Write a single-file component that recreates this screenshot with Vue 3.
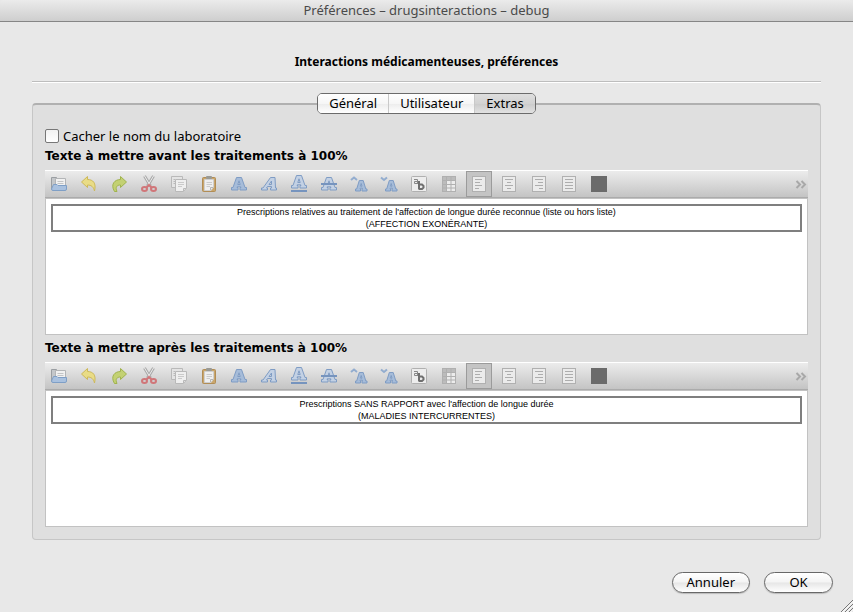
<script setup>
import { ref } from 'vue'

const tabs = ['Général', 'Utilisateur', 'Extras']
const activeTab = ref('Extras')
const hideLab = ref(false)

const letterA = 'M0.500 14V11.500H2L5.500 1.500H10.500L14 11.500H15.500V14H9V11.500H10L9.800 10.800H6.200L6 11.500H7V14ZM6.800 8.500H9.200L8 4.800Z'
const smallA = 'M4.500 15V13H5.700L8.300 4.500H12.200L14.800 13H16V15H11V13H11.500L11.300 12.200H9.200L9 13H9.500V15ZM9.500 10.200H11L10.200 7.500Z'

const tools = [
  { id: 'open', label: 'Ouvrir' },
  { id: 'undo', label: 'Annuler la saisie' },
  { id: 'redo', label: 'Rétablir' },
  { id: 'cut', label: 'Couper' },
  { id: 'copy', label: 'Copier' },
  { id: 'paste', label: 'Coller' },
  { id: 'bold', label: 'Gras' },
  { id: 'italic', label: 'Italique' },
  { id: 'underline', label: 'Souligné' },
  { id: 'strike', label: 'Barré' },
  { id: 'bigger', label: 'Agrandir' },
  { id: 'smaller', label: 'Réduire' },
  { id: 'font', label: 'Police' },
  { id: 'table', label: 'Tableau' },
  { id: 'left', label: 'Aligner à gauche', lines: 'M4 4.500H11M4 7.500H9M4 10.500H11M4 13.500H8' },
  { id: 'center', label: 'Centrer', lines: 'M4 4.500H12M6 7.500H10M4 10.500H12M6 13.500H10' },
  { id: 'right', label: 'Aligner à droite', lines: 'M4 4.500H12M7 7.500H12M4 10.500H12M8 13.500H12' },
  { id: 'justify', label: 'Justifier', lines: 'M4 4.500H12M4 7.500H12M4 10.500H12M4 13.500H12' },
  { id: 'color', label: 'Couleur' },
]

const editors = ref([
  {
    id: 'before',
    title: 'Texte à mettre avant les traitements à 100%',
    align: 'left',
    lines: [
      "Prescriptions relatives au traitement de l'affection de longue durée reconnue (liste ou hors liste)",
      '(AFFECTION EXONÉRANTE)',
    ],
  },
  {
    id: 'after',
    title: 'Texte à mettre après les traitements à 100%',
    align: 'left',
    lines: [
      "Prescriptions SANS RAPPORT avec l'affection de longue durée",
      '(MALADIES INTERCURRENTES)',
    ],
  },
])
</script>

<template>
  <div class="window">
    <header class="titlebar">Préférences – drugsinteractions – debug</header>
    <main class="content">
      <h1 class="heading">Interactions médicamenteuses, préférences</h1>
      <div class="tabs" role="tablist">
        <button
          v-for="tab in tabs"
          :key="tab"
          type="button"
          role="tab"
          class="tab"
          :class="{ active: tab === activeTab }"
          :aria-selected="tab === activeTab"
          @click="activeTab = tab"
        >{{ tab }}</button>
      </div>
      <section class="panel">
        <label class="check" for="hide-lab">
          <input id="hide-lab" v-model="hideLab" type="checkbox" />
          Cacher le nom du laboratoire
        </label>
        <div class="groups">
          <div v-for="editor in editors" :key="editor.id">
            <h2 :id="editor.id" class="label">{{ editor.title }}</h2>
            <div class="toolbar" role="toolbar">
              <button
                v-for="tool in tools"
                :key="tool.id"
                type="button"
                class="tool"
                :class="{ pressed: tool.id === editor.align }"
                :aria-label="tool.label"
                @click="tool.lines && (editor.align = tool.id)"
              >
                <svg width="18" height="18" viewBox="0 0 18 18">
                  <g v-if="tool.id === 'open'">
                    <path d="M1.500 14V2.500H6.500L7.500 4H9V14Z" fill="#c4c7ca" stroke="#9a9ea2" />
                    <path d="M5.500 12V3.500H15.500V12Z" fill="#f1f1f1" stroke="#b3b5b7" />
                    <path d="M7.500 6.500H13.500M7.500 8.500H13.500" stroke="#c2c4c6" />
                    <path d="M3.500 9.500H7L8 10.500H16.500V14Q16.500 15.500 15 15.500H3Q1.500 15.500 1.500 14Z" fill="#a9c1df" stroke="#7f9fc6" />
                  </g>
                  <g v-else-if="tool.id === 'undo'">
                    <path d="M1.500 7L7.500 1.500V4.500C13 4.500 16.500 8 14.500 16C13.500 12 11.500 10 7.500 10V12.500Z" fill="#e9dc86" stroke="#cdb95a" stroke-linejoin="round" />
                  </g>
                  <g v-else-if="tool.id === 'redo'">
                    <path d="M16.500 7L10.500 1.500V4.500C5 4.500 0 9 4.500 16.500H7C5 12 7 10 10.500 10V12.500Z" fill="#c3d173" stroke="#a0b34e" stroke-linejoin="round" />
                  </g>
                  <g v-else-if="tool.id === 'cut'" fill="none">
                    <path d="M4.500 1L10.500 11M13.500 1L7.500 11" stroke="#a9a9a9" stroke-width="3" />
                    <path d="M4.500 1L10.500 11M13.500 1L7.500 11" stroke="#ededed" />
                    <ellipse cx="4.500" cy="14" rx="2.500" ry="2" stroke="#d07679" stroke-width="2" />
                    <ellipse cx="13.500" cy="14" rx="2.500" ry="2" stroke="#d07679" stroke-width="2" />
                    <path d="M6.500 12.500L9 10L11.500 12.500" stroke="#d07679" stroke-width="2" />
                  </g>
                  <g v-else-if="tool.id === 'copy'" stroke="#b9b9b9">
                    <path d="M1.500 1.500H12.500V12.500H1.500Z" fill="#e4e4e4" />
                    <path d="M3.500 4.500H5M3.500 6.500H5M3.500 8.500H5" />
                    <path d="M5.500 4.500H16.500V13L13.500 16.500H5.500Z" fill="#efefef" />
                    <path d="M8 7.500H14M8 9.500H14M8 11.500H12" stroke="#cacaca" />
                    <path d="M13.500 16V13.500H16" fill="none" />
                  </g>
                  <g v-else-if="tool.id === 'paste'">
                    <rect x="2.500" y="2.500" width="13" height="14" rx="1" fill="#c9a66c" stroke="#b18d56" />
                    <path d="M4.500 4.500H13.500V12L11 15.500H4.500Z" fill="#efefef" stroke="#cfcfcf" />
                    <rect x="6" y="1" width="6" height="3" rx="1" fill="#9a9a94" />
                    <path d="M6.500 7.500H12M6.500 9.500H12M6.500 11.500H10" stroke="#cacaca" />
                    <path d="M10.500 15V12.500H13" fill="none" stroke="#b5b5b5" />
                  </g>
                  <g v-else-if="tool.id === 'bold'" transform="translate(1 1)" class="letter">
                    <path :d="letterA" fill-rule="evenodd" />
                  </g>
                  <g v-else-if="tool.id === 'italic'" class="letter light">
                    <path d="M1.500 15V13H3L10.500 2.500H15L15.500 13H16.500V15H10.500V13H11.500V11.500H7.500L6.500 13H7.500V15ZM9 9.500H11.500V6Z" fill-rule="evenodd" />
                  </g>
                  <g v-else-if="tool.id === 'underline'" class="letter light">
                    <path :d="letterA" fill-rule="evenodd" transform="translate(1 -1)" />
                    <path d="M1 16H17" class="bar" />
                  </g>
                  <g v-else-if="tool.id === 'strike'" class="letter light">
                    <path :d="letterA" fill-rule="evenodd" transform="translate(1 1)" />
                    <path d="M1 9H17" class="bar" />
                  </g>
                  <g v-else-if="tool.id === 'bigger'" class="letter">
                    <path :d="smallA" fill-rule="evenodd" transform="translate(1 1)" />
                    <path d="M1 5L4 2.500L7 5" class="chevron" />
                  </g>
                  <g v-else-if="tool.id === 'smaller'" class="letter">
                    <path :d="smallA" fill-rule="evenodd" transform="translate(1 1)" />
                    <path d="M1 2.500L4 5L7 2.500" class="chevron" />
                  </g>
                  <g v-else-if="tool.id === 'font'" fill="none" stroke="#6f6f6f">
                    <rect x="1.500" y="1.500" width="15" height="15" rx="1" fill="#ededed" stroke="#b0b0b0" />
                    <path d="M4 4.500H7.500V8.500M7.500 6.500H4.500V8.500H8.500" stroke="#888" />
                    <path d="M9 6V14.500M9 9.500H12L13.500 11V12.500L12 14H9" stroke-width="2" />
                  </g>
                  <g v-else-if="tool.id === 'table'" stroke="#b0b0b0">
                    <rect x="2.500" y="1.500" width="13" height="15" fill="#ececec" />
                    <path d="M3 2H15V5H3ZM3 2H6V16H3Z" fill="#bcbcbc" stroke="none" />
                    <path d="M2.500 5.500H15.500M2.500 9.500H15.500M2.500 13H15.500M6.500 1.500V16.500M11 1.500V16.500" />
                  </g>
                  <g v-else-if="tool.id === 'color'">
                    <rect x="1" y="1" width="16" height="16" fill="#6b6b6b" />
                  </g>
                  <g v-else fill="none" stroke="#b0b0b0">
                    <rect x="2.500" y="1.500" width="13" height="15" fill="#ebebeb" />
                    <path :d="tool.lines" transform="translate(1 0)" stroke="#adadad" />
                  </g>
                </svg>
              </button>
              <button type="button" class="more" aria-label="Plus d'outils">
                <svg width="12" height="9" viewBox="0 0 12 9">
                  <path d="M1.500 1L5 4.500L1.500 8M6.500 1L10 4.500L6.500 8" fill="none" stroke="#a8a8a8" stroke-width="2" />
                </svg>
              </button>
            </div>
            <div class="editor" role="textbox" contenteditable="true" aria-multiline="true" :aria-labelledby="editor.id">
              <div class="frame">
                <p v-for="line in editor.lines" :key="line">{{ line }}</p>
              </div>
            </div>
          </div>
        </div>
      </section>
      <footer class="actions">
        <button type="button" class="push">Annuler</button>
        <button type="button" class="push">OK</button>
      </footer>
    </main>
    <svg class="grip" width="12" height="12" viewBox="0 0 12 12">
      <path d="M0 12L12 0M4 12L12 4M8 12L12 8" stroke="#777" fill="none" />
      <path d="M1.500 12L12 1.500M5.500 12L12 5.500M9.500 12L12 9.500" stroke="#fff" fill="none" />
    </svg>
  </div>
</template>

<style>
body {
  margin: 0;
  background: #e8e8e8;
}
</style>

<style scoped>
.window {
  position: relative;
  box-sizing: border-box;
  min-height: 100vh;
  display: flex;
  flex-direction: column;
  background: #e8e8e8;
  color: #000;
  font-family: "Noto Sans", "Open Sans", sans-serif;
  font-size: 13px;
}
.titlebar {
  height: 21px;
  line-height: 21px;
  border-bottom: 1px solid #868686;
  border-radius: 4px 4px 0 0;
  background: linear-gradient(#ebebeb, #cecece);
  color: #4a4a4a;
  text-align: center;
}
.content {
  flex: 1;
  display: flex;
  flex-direction: column;
  padding: 30px 32px 0;
}
.heading {
  margin: 0;
  padding-bottom: 9px;
  border-bottom: 1px solid #bdbdbd;
  box-shadow: 0 1px #fff;
  font-size: 12px;
  line-height: 20px;
  text-align: center;
}
.tabs {
  position: relative;
  display: flex;
  align-self: center;
  margin: 11px 0 -11px;
  border: 1px solid #6b6b6b;
  border-radius: 5px;
  overflow: hidden;
}
.tab {
  height: 19px;
  padding: 0 11px;
  border: 0;
  border-right: 1px solid #c9c9c9;
  background: linear-gradient(#fff, #f6f6f6 50%, #ececec 51%, #fff);
  font: inherit;
  line-height: 19px;
}
.tab:last-child {
  border-right: 0;
}
.tab.active {
  background: linear-gradient(#dedede, #d2d2d2 50%, #cacaca 51%, #e2e2e2);
}
.panel {
  padding: 22px 12px 12px;
  border: 1px solid #c6c6c6;
  border-top: 2px solid #b0b0b0;
  border-radius: 4px;
  background: #dfdfdf;
}
.check {
  display: flex;
  align-items: center;
  gap: 4px;
  height: 18px;
}
.check input {
  appearance: none;
  box-sizing: border-box;
  width: 14px;
  height: 14px;
  margin: 0;
  border: 1px solid #777;
  border-radius: 2px;
  background: linear-gradient(#f2f2f2, #fff);
}
.check input:checked {
  background: #6b8fc0;
}
.groups {
  display: grid;
  gap: 2px;
}
.label {
  margin: 0 0 3px;
  font-family: "DejaVu Sans", sans-serif;
  font-size: 12px;
  line-height: 22px;
}
.toolbar {
  display: flex;
  align-items: center;
  gap: 4px;
  height: 26px;
  padding: 0 1px;
  border-top: 1px solid #fff;
  border-bottom: 1px solid #ababab;
  background: linear-gradient(#ececec, #c4c4c4);
}
.tool {
  box-sizing: border-box;
  display: grid;
  place-items: center;
  flex: none;
  width: 26px;
  height: 26px;
  padding: 0;
  border: 1px solid transparent;
  background: none;
}
.tool.pressed {
  border-color: #9b9b9b;
  background: #c4c4c4;
}
.letter {
  fill: #a6bcd9;
  stroke: #7f9cc4;
}
.letter.light {
  fill: #c3d1e4;
}
.letter .bar {
  stroke: #7694be;
  stroke-width: 2;
}
.letter .chevron {
  fill: none;
  stroke: #93adcf;
  stroke-width: 2;
}
.more {
  display: flex;
  margin-left: auto;
  padding: 0;
  border: 0;
  background: none;
}
.editor {
  min-height: 125px;
  padding: 5px;
  border: 1px solid #c2c2c2;
  background: #fff;
  outline: none;
}
.frame {
  border: 2px solid #7f7f7f;
  font-family: "Liberation Sans", Arial, sans-serif;
  font-size: 9px;
  line-height: 12px;
  text-align: center;
}
.frame p {
  margin: 0;
}
.actions {
  display: flex;
  justify-content: flex-end;
  gap: 14px;
  margin: 32px -12px 0 0;
}
.push {
  box-sizing: border-box;
  min-width: 69px;
  height: 21px;
  padding: 0 14px;
  border: 1px solid #686868;
  border-radius: 11px;
  background: linear-gradient(#fff, #f4f4f4 48%, #e6e6e6 52%, #fff);
  box-shadow: 0 1px 1px #bbb;
  font: inherit;
  line-height: 19px;
}
.grip {
  position: absolute;
  right: 0;
  bottom: 0;
}
</style>
